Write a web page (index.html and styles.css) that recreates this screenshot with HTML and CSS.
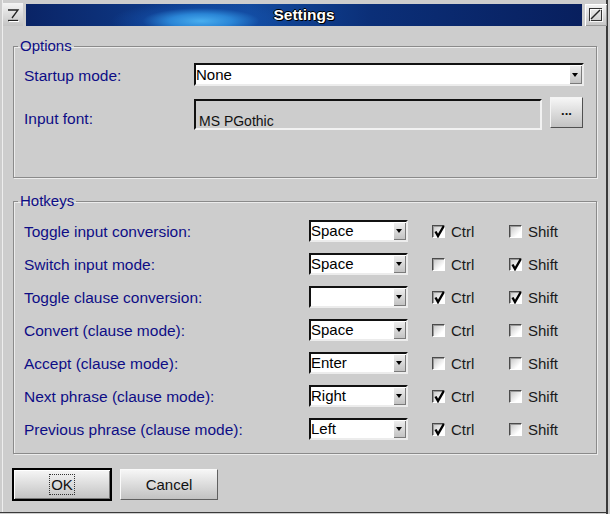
FILE: index.html
```html
<!DOCTYPE html>
<html>
<head>
<meta charset="utf-8">
<title>Settings</title>
<link rel="stylesheet" href="styles.css">
</head>
<body>
<div class="window">
  <div class="titlebar">
    <div class="tbtn left">
      <svg width="20" height="23" viewBox="0 0 20 23"><path d="M5 7 H15 L9 15" fill="none" stroke="#222" stroke-width="1.3"/><path d="M5 17.5 H15" stroke="#222" stroke-width="1.3"/><path d="M6 18.5 H16" stroke="#fff" stroke-width="1"/></svg>
    </div>
    <div class="title">Settings</div>
    <div class="tbtn right">
      <svg width="18" height="18" viewBox="0 0 18 18"><rect x="2.5" y="2.5" width="12" height="12" fill="none" stroke="#333" stroke-width="1"/><rect x="3.5" y="3.5" width="12" height="12" fill="none" stroke="#fff" stroke-width="1" opacity=".8"/><path d="M4 13 L13 4" stroke="#222" stroke-width="1.5"/></svg>
    </div>
  </div>
  <div class="body">
    <fieldset class="group options">
      <legend>Options</legend>
      <div class="opt-grid">
        <span class="lbl">Startup mode:</span>
        <div class="combo"><span class="val">None</span><span class="arrow"></span></div>
        <span class="lbl font-lbl">Input font:</span>
        <div class="fontrow">
          <div class="fontfield">MS PGothic</div>
          <div class="btn dots">...</div>
        </div>
      </div>
    </fieldset>
    <fieldset class="group hotkeys">
      <legend>Hotkeys</legend>
      <div class="hk-grid">
        <span class="lbl">Toggle input conversion:</span>
        <div class="combo small"><span class="val">Space</span><span class="arrow"></span></div>
        <label class="chk"><span class="box on"></span>Ctrl</label>
        <label class="chk"><span class="box"></span>Shift</label>

        <span class="lbl">Switch input mode:</span>
        <div class="combo small"><span class="val">Space</span><span class="arrow"></span></div>
        <label class="chk"><span class="box"></span>Ctrl</label>
        <label class="chk"><span class="box on"></span>Shift</label>

        <span class="lbl">Toggle clause conversion:</span>
        <div class="combo small"><span class="val"></span><span class="arrow"></span></div>
        <label class="chk"><span class="box on"></span>Ctrl</label>
        <label class="chk"><span class="box on"></span>Shift</label>

        <span class="lbl">Convert (clause mode):</span>
        <div class="combo small"><span class="val">Space</span><span class="arrow"></span></div>
        <label class="chk"><span class="box"></span>Ctrl</label>
        <label class="chk"><span class="box"></span>Shift</label>

        <span class="lbl">Accept (clause mode):</span>
        <div class="combo small"><span class="val">Enter</span><span class="arrow"></span></div>
        <label class="chk"><span class="box"></span>Ctrl</label>
        <label class="chk"><span class="box"></span>Shift</label>

        <span class="lbl">Next phrase (clause mode):</span>
        <div class="combo small"><span class="val">Right</span><span class="arrow"></span></div>
        <label class="chk"><span class="box on"></span>Ctrl</label>
        <label class="chk"><span class="box"></span>Shift</label>

        <span class="lbl">Previous phrase (clause mode):</span>
        <div class="combo small"><span class="val">Left</span><span class="arrow"></span></div>
        <label class="chk"><span class="box on"></span>Ctrl</label>
        <label class="chk"><span class="box"></span>Shift</label>
      </div>
    </fieldset>
    <div class="buttons">
      <div class="btn default"><span class="focus">OK</span></div>
      <div class="btn cancel">Cancel</div>
    </div>
  </div>
</div>
</body>
</html>
```
FILE: styles.css
```css
* { box-sizing: border-box; }
html, body { margin: 0; padding: 0; }
body {
  width: 610px;
  height: 514px;
  overflow: hidden;
  background: #cdcdcd;
  font-family: "Liberation Sans", Arial, sans-serif;
  font-size: 15px;
}
.window {
  width: 610px;
  height: 514px;
  background: #cdcdcd;
  display: flex;
  flex-direction: column;
  box-shadow: inset -2px 0 0 #cdcdcd, inset -4px 0 0 #3a3a3a,
              inset 0 -1px 0 #cdcdcd, inset 0 -2px 0 #3a3a3a,
              inset 2px 0 0 #cdcdcd, inset 3px 0 0 #eeeeee;
}
.titlebar {
  height: 26px;
  display: flex;
  align-items: flex-start;
  padding: 3px 3px 0 3px;
  gap: 3px;
}
.tbtn {
  background: linear-gradient(#f4f4f4, #c4c4c4);
  display: flex;
  align-items: center;
  justify-content: center;
}
.tbtn.left { width: 20px; height: 23px; }
.tbtn.right { width: 22px; height: 22px; margin-top: 1px; box-shadow: inset 1px 1px 0 #fff, inset -1px -1px 0 #999; }
.title {
  flex: 1;
  height: 22px;
  margin-top: 1px;
  background-color: #0a2668;
  background-image:
    radial-gradient(90px 20px at 175px 17px, #48aeef 0%, #2a85d6 35%, rgba(20,80,170,0.5) 65%, rgba(16,60,150,0) 100%),
    linear-gradient(90deg, #0a2466 0%, #0e3a88 25%, #124a9e 40%, #0b2f78 62%, #081f5e 100%);
  color: #fff;
  font-weight: bold;
  font-size: 15.5px;
  text-align: center;
  line-height: 22px;
  text-shadow: 1px 1px 0 #000, -1px 0 0 #000, 0 -1px 0 #000, 1px 0 0 #000;
}
.body {
  padding: 12px 13px 0 11px;
  display: flex;
  flex-direction: column;
}
.group {
  margin: 0 0 0 2px;
  border: 1px solid #8a8a8a;
  box-shadow: inset 1px 1px 0 #ececec, 1px 1px 0 #ececec;
  padding: 0 12px 0 10px;
  min-width: 0;
}
.group legend {
  color: #0d0d86;
  padding: 0 2px;
  margin-left: -6px;
  line-height: 16px;
  font-size: 15px;
}
.lbl { color: #0d0d86; white-space: nowrap; font-size: 15.5px; padding-top: 2px; }
.options { padding-top: 9px; padding-bottom: 47px; }
.opt-grid {
  display: grid;
  grid-template-columns: 170px 1fr;
  row-gap: 12px;
  align-items: center;
}
.lbl.font-lbl { align-self: start; padding-top: 12px; }
.combo {
  height: 23px;
  background: #fff;
  border-top: 2px solid #111;
  border-left: 2px solid #111;
  border-bottom: 2px solid #ececec;
  border-right: 2px solid #ececec;
  display: flex;
  align-items: stretch;
}
.combo .val {
  flex: 1;
  color: #000;
  line-height: 19px;
  padding-left: 0;
  white-space: nowrap;
  overflow: hidden;
}
.combo .arrow {
  width: 13px;
  background: linear-gradient(#f0f0f0, #c0c0c0);
  box-shadow: inset 1px 1px 0 #fff, inset -1px -1px 0 #7a7a7a;
  position: relative;
}
.combo .arrow::after {
  content: "";
  position: absolute;
  left: 3px;
  top: 8px;
  border-left: 3.5px solid transparent;
  border-right: 3.5px solid transparent;
  border-top: 4px solid #000;
}
.fontrow {
  display: flex;
  align-items: flex-start;
  gap: 8px;
  margin-top: 1px;
}
.fontfield {
  width: 348px;
  height: 31px;
  border-top: 2px solid #111;
  border-left: 2px solid #111;
  border-bottom: 2px solid #f2f2f2;
  border-right: 2px solid #f2f2f2;
  padding: 12px 0 0 3px;
  color: #111;
  font-size: 14px;
  line-height: 17px;
}
.btn {
  background: linear-gradient(#f6f6f6, #c2c2c2);
  border: 1px solid;
  border-color: #f4f4f4 #505050 #505050 #f4f4f4;
  display: flex;
  align-items: center;
  justify-content: center;
  color: #111;
}
.btn.dots {
  width: 33px;
  height: 31px;
  margin-top: -2px;
  font-weight: bold;
  font-size: 13px;
  padding-bottom: 4px;
}
.hotkeys { margin-top: 15px; padding-top: 11px; padding-bottom: 13px; }
.hk-grid {
  display: grid;
  grid-template-columns: 285px 123px 77px auto;
  row-gap: 11px;
  align-items: center;
}
.combo.small { width: 99px; height: 22px; }
.combo.small .val { line-height: 18px; }
.combo.small .arrow::after { top: 7px; }
.chk {
  display: flex;
  align-items: center;
  gap: 6px;
  color: #1a1a1a;
}
.box {
  width: 13px;
  height: 13px;
  border-top: 1px solid #4a4a4a;
  border-left: 1px solid #4a4a4a;
  border-bottom: 1px solid #fff;
  border-right: 1px solid #fff;
  background: linear-gradient(135deg, #c4c4c4, #ffffff 75%);
  box-shadow: inset 1px 1px 0 #9a9a9a;
  position: relative;
}
.box.on::after {
  content: "";
  position: absolute;
  left: 1px;
  top: -1px;
  width: 11px;
  height: 13px;
  background: url("data:image/svg+xml;utf8,<svg xmlns='http://www.w3.org/2000/svg' width='11' height='13' viewBox='0 0 11 13'><path d='M1.5 6.5 L4 11 L9.8 1' fill='none' stroke='black' stroke-width='2.4'/></svg>") no-repeat;
}
.buttons {
  display: flex;
  align-items: center;
  gap: 8px;
  margin-top: 14px;
  margin-left: 1px;
}
.btn.default {
  width: 100px;
  height: 33px;
  border: 2px solid #000;
  box-shadow: inset 1px 1px 0 #fff, inset -1px -1px 0 #777;
}
.btn.default .focus {
  outline: 1px dotted #333;
  padding: 1px 1px;
  line-height: 17px;
}
.btn.cancel {
  width: 98px;
  height: 31px;
  border-color: #fafafa #606060 #606060 #fafafa;
}
```
